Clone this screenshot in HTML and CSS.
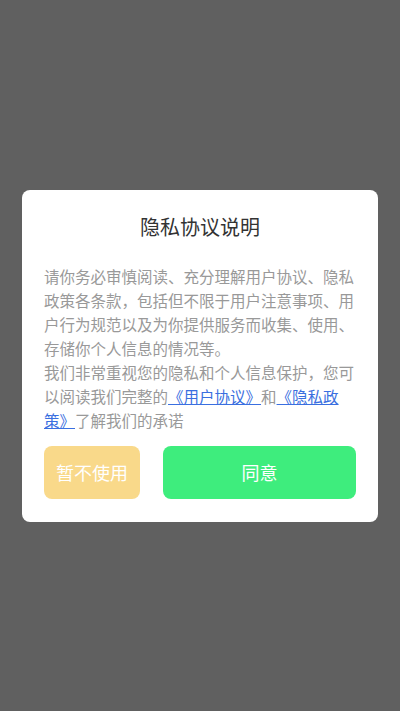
FILE: index.html
```html
<!DOCTYPE html>
<html lang="zh-CN">
<head>
<meta charset="utf-8">
<title>隐私协议说明</title>
<link rel="stylesheet" href="styles.css">
</head>
<body>
<div class="overlay">
  <div class="dialog">
    <h1 class="title">隐私协议说明</h1>
    <div class="content">
      <p class="para">请你务必审慎阅读、充分理解用户协议、隐私政策各条款，包括但不限于用户注意事项、用户行为规范以及为你提供服务而收集、使用、存储你个人信息的情况等。</p>
      <p class="para">我们非常重视您的隐私和个人信息保护，您可以阅读我们完整的<a class="link" href="#">《用户协议》</a>和<a class="link" href="#">《隐私政策》</a>了解我们的承诺</p>
    </div>
    <div class="actions">
      <button class="btn btn-decline">暂不使用</button>
      <button class="btn btn-agree">同意</button>
    </div>
  </div>
</div>
</body>
</html>
```
FILE: styles.css
```css
html, body {
  margin: 0;
  padding: 0;
}
body {
  background: #606060;
  font-family: "Noto Sans CJK SC", "Noto Sans", sans-serif;
}
.overlay {
  width: 400px;
  height: 711px;
  display: flex;
  align-items: center;
  justify-content: center;
}
.dialog {
  width: 356px;
  box-sizing: border-box;
  background: #ffffff;
  border-radius: 8px;
  padding: 23px 22px 23px;
  display: flex;
  flex-direction: column;
}
.title {
  margin: 0;
  font-size: 20px;
  line-height: 28px;
  font-weight: normal;
  color: #333333;
  text-align: center;
}
.content {
  margin-top: 23px;
}
.para {
  margin: 0;
  font-size: 15.5px;
  line-height: 24px;
  color: #999999;
}
.link {
  color: #3a6fe0;
  text-decoration: underline;
}
.actions {
  margin-top: 14px;
  display: flex;
  gap: 23px;
}
.btn {
  height: 53px;
  border: none;
  border-radius: 8px;
  color: #ffffff;
  font-family: "Noto Sans CJK SC", "Noto Sans", sans-serif;
  font-size: 18px;
  padding: 0;
}
.btn-decline {
  width: 96px;
  background: #f9d98a;
}
.btn-agree {
  flex: 1;
  background: #3eed7d;
}
```
